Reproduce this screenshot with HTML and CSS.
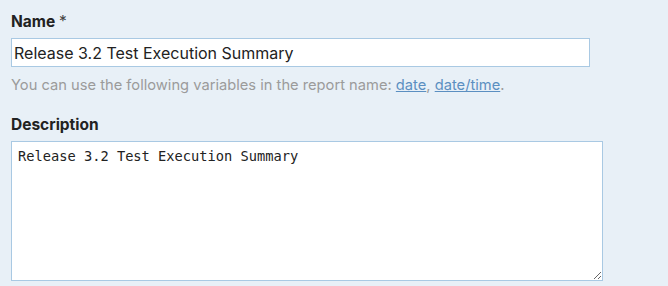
FILE: index.html
```html
<!DOCTYPE html>
<html lang="en">
<head>
  <meta charset="UTF-8">
  <title>Report settings</title>
  <link rel="stylesheet" href="styles.css">
</head>
<body>
  <form class="report-form">
    <!-- Name -->
    <div class="field">
      <label class="field-label" for="reportName">Name <span class="req">*</span></label>
      <input class="text-input" id="reportName" type="text" value="Release 3.2 Test Execution Summary">
      <p class="hint">You can use the following variables in the report name: <a href="#">date</a>, <a href="#">date/time</a>.</p>
    </div>

    <!-- Description -->
    <div class="field">
      <label class="field-label" for="reportDesc">Description</label>
      <textarea class="text-area" id="reportDesc">Release 3.2 Test Execution Summary</textarea>
    </div>
  </form>
</body>
</html>
```

FILE: styles.css
```css
* { box-sizing: border-box; }

body {
  margin: 0;
  background: #e8f0f7;
  font-family: Inter, Roboto, 'Liberation Sans', sans-serif;
  color: #222;
}

.report-form {
  padding: 12px 11px 0;
}

.field {
  display: flex;
  flex-direction: column;
  align-items: flex-start;
}

.field + .field {
  margin-top: 20px;
}

.field-label {
  font-size: 15.5px;
  font-weight: 700;
  line-height: 20px;
  color: #222;
  margin-bottom: 6px;
}

.req {
  font-weight: 400;
  color: #444;
}

.text-input {
  width: 579px;
  height: 29px;
  padding: 0 2px;
  border: 1px solid #a9c9e3;
  background: #fff;
  font-family: Inter, Roboto, 'Liberation Sans', sans-serif;
  font-size: 16px;
  color: #222;
  outline: none;
}

.hint {
  margin: 8px 0 0;
  font-size: 14.7px;
  line-height: 20px;
  color: #9b9b9b;
}

.hint a {
  color: #5b8fc1;
  text-decoration: underline;
}

.text-area {
  width: 592px;
  height: 140px;
  padding: 5px 6px;
  border: 1px solid #a9c9e3;
  background: #fff;
  font-family: 'DejaVu Sans Mono', 'Liberation Mono', monospace;
  font-size: 13.7px;
  line-height: 18px;
  color: #222;
  resize: vertical;
  outline: none;
}
```
